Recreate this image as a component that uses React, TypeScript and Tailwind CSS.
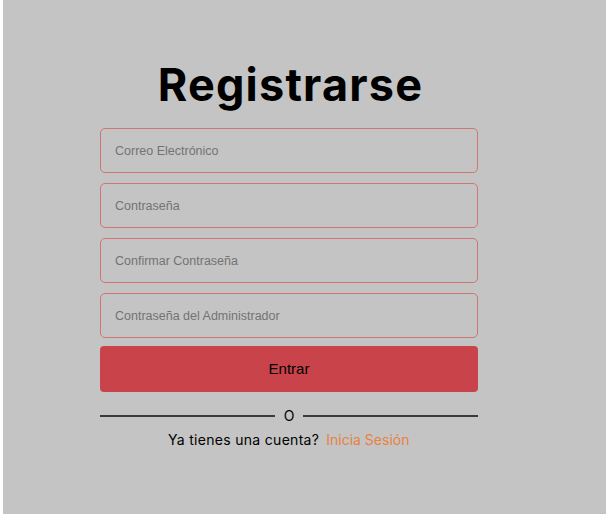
import React from "react";

const fields = [
  { placeholder: "Correo Electrónico", type: "email" },
  { placeholder: "Contraseña", type: "password" },
  { placeholder: "Confirmar Contraseña", type: "password" },
  { placeholder: "Contraseña del Administrador", type: "password" },
];

const App = () => {
  return (
    <div className="w-[608px] h-[515px] bg-white">
      <div className="ml-[3px] w-[603px] h-[514px] bg-[#c4c4c4] pt-[57px]">
        <form
          className="ml-[97px] w-[378px] flex flex-col"
          onSubmit={(e) => e.preventDefault()}
        >
          <h1 className="text-center font-['Inter',sans-serif] font-bold text-[45px] leading-[56px] text-black tracking-[1.2px] pl-[3px]">
            Registrarse
          </h1>
          <div className="mt-[15px] flex flex-col gap-[10px]">
            {fields.map((f) => (
              <input
                key={f.placeholder}
                type={f.type}
                placeholder={f.placeholder}
                className="h-[45px] w-full rounded-[5px] border border-[#d07474] bg-transparent pl-[14px] font-['Liberation_Sans',Arial,sans-serif] text-[12.5px] text-black outline-none placeholder:text-[#737373]"
              />
            ))}
          </div>
          <button
            type="submit"
            className="mt-[8px] h-[46px] w-full rounded-[4px] bg-[#c8444a] font-['Liberation_Sans',Arial,sans-serif] text-[15px] text-black"
          >
            Entrar
          </button>
          <div className="mt-[17px] flex items-center gap-[9px] font-['Inter',sans-serif] text-[14px] text-black">
            <span className="h-[1.5px] flex-1 bg-[#3a3a3a]" />
            <span className="leading-none">O</span>
            <span className="h-[1.5px] flex-1 bg-[#3a3a3a]" />
          </div>
          <p className="mt-[8px] pl-[68px] font-['Inter',sans-serif] text-[14px] leading-[18px] tracking-[0.3px] text-black">
            Ya tienes una cuenta?
            <a href="#" className="ml-[7px] tracking-[0px] text-[#e8823f]">
              Inicia Sesión
            </a>
          </p>
        </form>
      </div>
    </div>
  );
};

export default App;
